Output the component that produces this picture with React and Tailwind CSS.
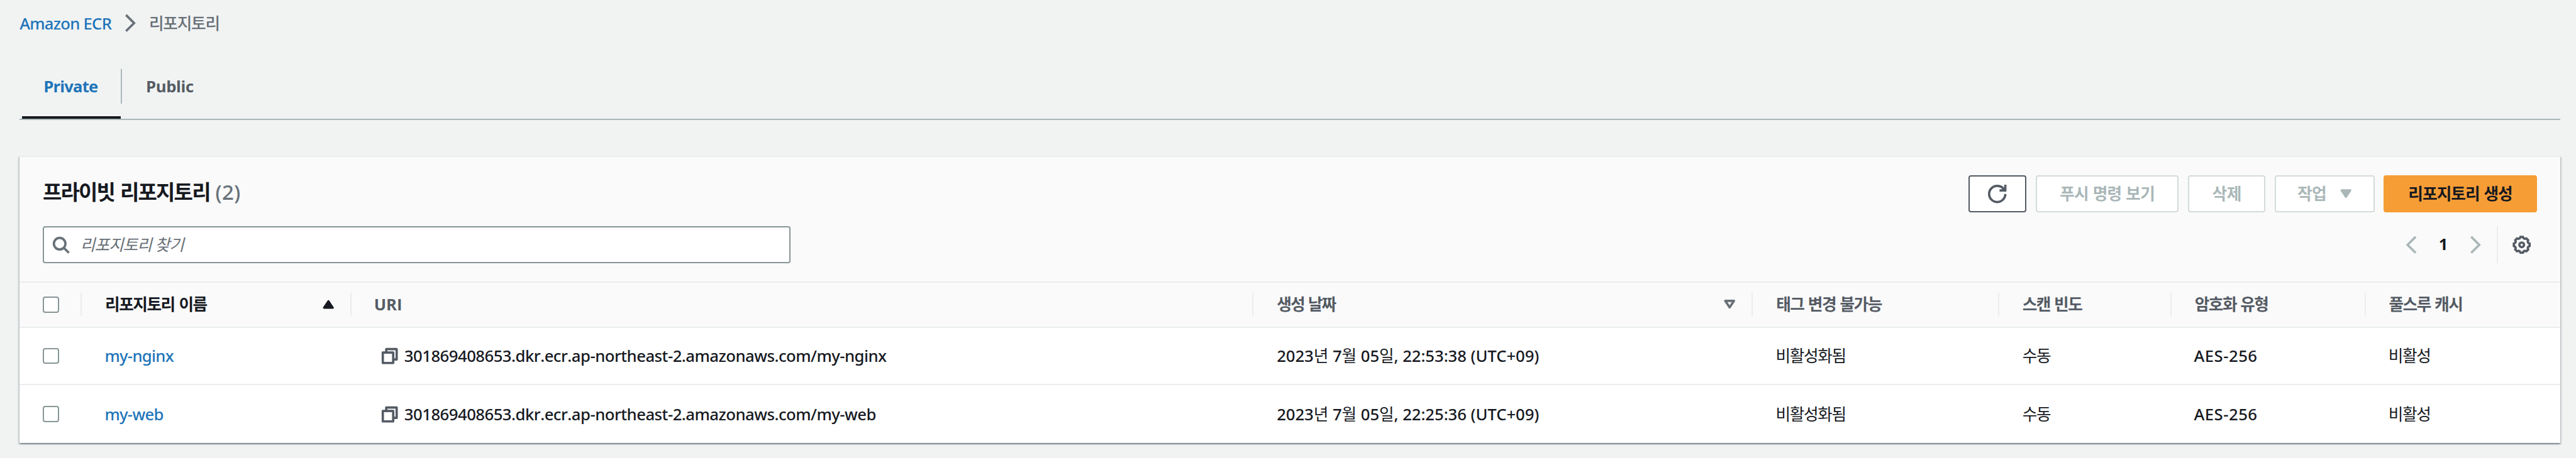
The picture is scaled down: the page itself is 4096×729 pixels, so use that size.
import React from 'react';

const Icon = ({ children, className = '' }) => (
  <svg viewBox="0 0 16 16" fill="none" stroke="currentColor" strokeWidth="2" className={`h-[29.4px] w-[29.4px] shrink-0 overflow-visible ${className}`}>
    {children}
  </svg>
);

const polar = (r, deg) => {
  const a = (deg * Math.PI) / 180;
  return `${(8 + r * Math.sin(a)).toFixed(2)} ${(8 - r * Math.cos(a)).toFixed(2)}`;
};

const gearPath =
  'M' +
  Array.from({ length: 8 }, (_, i) => i * 45)
    .map((d) => [polar(6.9, d - 9), polar(6.9, d + 9), polar(5.9, d + 17), polar(5.9, d + 28)].join('L'))
    .join('L') +
  'Z';

const Checkbox = () => (
  <span className="block h-[25.7px] w-[25.7px] rounded-[4px] border-2 border-[#879596] bg-white" />
);

const Caret = ({ up = false, hollow = false, className = '' }) => (
  <svg viewBox="0 0 20 16" className={`h-[14.7px] w-[18.4px] shrink-0 overflow-visible ${className}`}>
    <path
      d={up ? 'M10 2.6 17.6 14H2.4Z' : 'M10 13.4 17.6 2H2.4Z'}
      fill={hollow ? 'none' : 'currentColor'}
      stroke="currentColor"
      strokeWidth={hollow ? 4 : 3.6}
      strokeLinejoin="round"
    />
  </svg>
);

const Button = ({ children, className }) => (
  <button type="button" className={`flex h-[58.8px] items-center justify-center rounded-[4px] border-2 text-[25.7px] font-bold leading-none ${className}`}>
    {children}
  </button>
);

const disabled = 'border-[#d5dbdb] bg-white text-[#aab7b8]';

const GRID = 'grid grid-cols-[99.2px_429.1px_1434px_794px_391.5px_274px_308.8px_1fr]';

const columns = [
  { label: '리포지토리 이름', className: 'tracking-[-1.5px] [word-spacing:1.5px] text-[#16191f]', sort: 'asc' },
  { label: 'URI', className: '-ml-[1.5px] text-[#545b64]' },
  { label: '생성 날짜', className: 'tracking-[-1.8px] [word-spacing:1px] text-[#545b64]', sort: 'none' },
  { label: '태그 변경 불가능', className: 'tracking-[-1.5px] [word-spacing:1.2px] text-[#545b64]' },
  { label: '스캔 빈도', className: 'tracking-[-1.5px] [word-spacing:1px] text-[#545b64]' },
  { label: '암호화 유형', className: 'tracking-[-1.5px] [word-spacing:1px] text-[#545b64]' },
  { label: '풀스루 캐시', className: 'tracking-[-1.5px] [word-spacing:1px] text-[#545b64]' },
];

const rows = [
  { name: 'my-nginx', time: '22:53:38' },
  { name: 'my-web', time: '22:25:36' },
];

const Cell = ({ children, className = 'pl-[36.7px]' }) => (
  <div className={`flex items-center pt-[2px] ${className}`}>{children}</div>
);

const Ko = ({ children }) => <span className="font-normal">{children}</span>;

const Row = ({ row, last }) => (
  <div className={`${GRID} h-[91.8px] ${last ? '' : 'border-b-2 border-[#eaeded]'} bg-white font-['Noto_Sans','Noto_Sans_CJK_KR',sans-serif] font-medium text-[#16191f]`}>
    <div className="flex items-center pl-[36.7px]">
      <Checkbox />
    </div>
    <Cell className="pl-[36px] tracking-[-0.7px] text-[#2074b9]">
      <a>{row.name}</a>
    </Cell>
    <Cell className="pl-[45.5px]">
      <Icon className="-mt-[2px] text-[#545b64]">
        <rect x="5" y="2" width="9" height="9" strokeLinejoin="round" />
        <rect x="2" y="5" width="9" height="9" strokeLinejoin="round" fill="#fff" />
      </Icon>
      <span className="pl-[8.5px] tracking-[-0.51px] [font-kerning:none]">301869408653.dkr.ecr.ap-northeast-2.amazonaws.com/{row.name}</span>
    </Cell>
    <Cell>
      <span className="tracking-[-0.06px]">
        2023<Ko>년</Ko> 7<Ko>월</Ko> 05<Ko>일</Ko>, {row.time} (UTC+09)
      </span>
    </Cell>
    <Cell className="pl-[36px] font-normal tracking-[-1.4px]">비활성화됨</Cell>
    <Cell className="pl-[36.7px] font-normal tracking-[-1.3px]">수동</Cell>
    <Cell className="pl-[35.5px] tracking-[0.5px]">AES-256</Cell>
    <Cell className="pl-[36px] font-normal tracking-[-1.4px]">비활성</Cell>
  </div>
);

export default function App() {
  return (
    <div className="h-[729px] w-[4096px] overflow-hidden bg-[#f1f3f3] pl-[31.2px] pr-[25.2px] font-['Open_Sans','Noto_Sans_CJK_KR',sans-serif] text-[25.7px] leading-[40px] text-[#16191f]">
      <nav className="flex h-[110px] items-start pt-[17.5px] font-['Noto_Sans','Noto_Sans_CJK_KR',sans-serif] font-medium">
        <a className="w-[161.7px] whitespace-nowrap tracking-[-0.75px] text-[#2074b9]">Amazon ECR</a>
        <Icon className="mt-[4.5px] text-[#687078]">
          <path d="m4 1 7 7-7 7" />
        </Icon>
        <span className="pl-[14.7px] tracking-[-1.25px] text-[#687078]">리포지토리</span>
      </nav>

      <div className="flex h-[81px] items-start border-b-2 border-[#aab7b8] pl-[3.5px] font-bold">
        <div className="flex h-[79px] w-[157.3px] flex-col justify-between border-b-4 border-[#16191f]">
          <span className="pl-[34.5px] pt-[7.5px] tracking-[-0.85px] text-[#2074b9]">Private</span>
        </div>
        <span className="h-[55px] w-[2px] bg-[#aab7b8]" />
        <span className="pl-[38px] pt-[7.5px] tracking-[-0.4px] text-[#545b64]">Public</span>
      </div>

      <section className="mt-[57px] h-[457px] border-t-2 border-[#eaeded] bg-[#fafafa] shadow-[0_2px_2px_0_rgba(0,28,36,0.3),2px_2px_2px_0_rgba(0,28,36,0.15),-2px_2px_2px_0_rgba(0,28,36,0.15)]">
        <div className="flex h-[198px] flex-col gap-[22px] pl-[36.7px] pr-[37.2px] pt-[29px]">
          <div className="flex items-center justify-between">
            <h1 className="-mt-[5px] text-[33px] font-bold tracking-[-1.8px] [word-spacing:2px]">
              프라이빗 리포지토리 <span className="font-['Noto_Sans'] font-medium tracking-[0.2px] text-[#687078]">(2)</span>
            </h1>
            <div className="flex gap-[14.8px]">
              <Button className="w-[92px] border-[#545b64] bg-white text-[#545b64]">
                <Icon>
                  <path d="M10 5h5V0M15 8a6.957 6.957 0 0 1-7 7 6.957 6.957 0 0 1-7-7 6.957 6.957 0 0 1 7-7 6.87 6.87 0 0 1 6.3 4" />
                </Icon>
              </Button>
              <Button className={`w-[227.5px] tracking-[-0.8px] [word-spacing:1px] ${disabled}`}>푸시 명령 보기</Button>
              <Button className={`w-[123px] tracking-[-0.5px] ${disabled}`}>삭제</Button>
              <Button className={`w-[158.7px] gap-[22px] tracking-[-0.5px] ${disabled}`}>
                작업
                <Caret />
              </Button>
              <Button className="w-[243.2px] border-[#f69d36] bg-[#f69d36] tracking-[-0.95px] [word-spacing:1px] text-[#16191f]">리포지토리 생성</Button>
            </div>
          </div>

          <div className="flex items-center justify-between">
            <div className="flex h-[58.8px] w-[1189.4px] items-center rounded-[4px] border-2 border-[#879596] bg-white pl-[12.5px] text-[#687078]">
              <Icon>
                <circle cx="7" cy="7" r="5" />
                <path d="m15 15-4.5-4.5" />
              </Icon>
              <span className="pl-[16px] pt-[1px] italic tracking-[-1px]">리포지토리 찾기</span>
            </div>
            <div className="flex h-[58.8px] items-center">
              <Icon className="text-[#aab7b8]">
                <path d="M12 1 5 8l7 7" />
              </Icon>
              <span className="w-[73.4px] text-center font-bold">1</span>
              <Icon className="text-[#aab7b8]">
                <path d="m4 1 7 7-7 7" />
              </Icon>
              <span className="ml-[18.5px] h-[58.8px] w-[2px] bg-[#eaeded]" />
              <Icon className="ml-[23.5px] mr-[9px] text-[#545b64]">
                <path d={gearPath} />
                <circle cx="8" cy="8" r="2" />
              </Icon>
            </div>
          </div>
        </div>

        <div className={`${GRID} h-[73.5px] items-center border-y-2 border-[#eaeded] font-bold`}>
          <div className="flex h-[36.7px] items-center border-r-2 border-[#eaeded] pl-[36.7px]">
            <Checkbox />
          </div>
          {columns.map((c, i) => (
            <div key={c.label} className={`flex h-[36.7px] items-center justify-between pl-[36.7px] ${i < columns.length - 1 ? 'border-r-2 border-[#eaeded]' : ''} ${c.sort ? 'pr-[26px]' : ''}`}>
              <span className={c.className}>{c.label}</span>
              {c.sort === 'asc' && <Caret up className="text-[#16191f]" />}
              {c.sort === 'none' && <Caret hollow className="text-[#687078]" />}
            </div>
          ))}
        </div>

        {rows.map((r, i) => (
          <Row key={r.name} row={r} last={i === rows.length - 1} />
        ))}
      </section>
    </div>
  );
}
